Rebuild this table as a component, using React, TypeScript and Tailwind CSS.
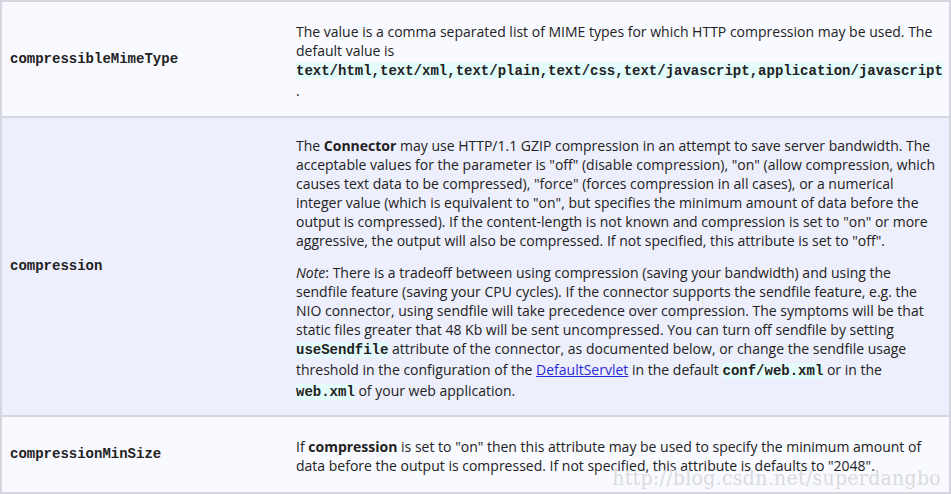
import React from 'react';

const mono = "font-['Liberation_Mono',monospace] tracking-normal";

function Code({ children }: { children: React.ReactNode }) {
    return <code className={`${mono} font-bold text-[14px] bg-[#e4fbfb] text-[#222]`}>{children}</code>;
}

function Row({ name, bg, pad, children }: { name: string; bg: string; pad: string; children: React.ReactNode }) {
    return (
        <div className={`flex ${bg}`}>
            <div className={`w-[286px] shrink-0 flex items-center pl-[8px] ${mono} font-bold text-[14px] text-[#222]`}>
                {name}
            </div>
            <div className={`flex-1 min-w-0 pl-[8px] pr-[8px] ${pad} flex flex-col gap-[13px]`}>
                {children}
            </div>
        </div>
    );
}

export default function App() {
    return (
        <div className="relative w-[951px] h-[494px] overflow-hidden bg-white font-['Open_Sans',sans-serif] text-[14px] leading-[19px] text-[#222] tracking-[0px]">
            <div className="border-2 border-[#d6d6de] divide-y-2 divide-[#d6d6de] h-[494px] flex flex-col">
                <Row name="compressibleMimeType" bg="bg-[#f9faff] h-[116px]" pad="pt-[20px] pb-[16px]">
                    <p>
                        The value is a comma separated list of MIME types for which HTTP compression may be used. The default value is{' '}
                        <Code>text/html,text/xml,text/plain,text/css,text/javascript,application/javascript</Code>{' '}.
                    </p>
                </Row>
                <Row name="compression" bg="bg-[#eeeffc] h-[299px]" pad="pt-[18px] pb-[16px]">
                    <p>
                        The <strong>Connector</strong> may use HTTP/1.1 GZIP compression in an attempt to save server bandwidth. The acceptable values for the parameter is "off" (disable compression), "on" (allow compression, which causes text data to be compressed), "force" (forces compression in all cases), or a numerical integer value (which is equivalent to "on", but specifies the minimum amount of data before the output is compressed). If the content-length is not known and compression is set to "on" or more aggressive, the output will also be compressed. If not specified, this attribute is set to "off".
                    </p>
                    <p>
                        <em>Note</em>: There is a tradeoff between using compression (saving your bandwidth) and using the sendfile feature (saving your CPU cycles). If the connector supports the sendfile feature, e.g. the NIO connector, using sendfile will take precedence over compression. The symptoms will be that static files greater that 48 Kb will be sent uncompressed. You can turn off sendfile by setting{' '}
                        <Code>useSendfile</Code> attribute of the connector, as documented below, or change the sendfile usage threshold in the configuration of the{' '}
                        <a href="#" className="text-[#2a2ad8] underline">DefaultServlet</a> in the default <Code>conf/web.xml</Code> or in the{' '}
                        <Code>web.xml</Code> of your web application.
                    </p>
                </Row>
                <Row name="compressionMinSize" bg="bg-[#f9faff] flex-1" pad="pt-[20px] pb-[14px]">
                    <p>
                        If <strong>compression</strong> is set to "on" then this attribute may be used to specify the minimum amount of data before the output is compressed. If not specified, this attribute is defaults to "2048".
                    </p>
                </Row>
            </div>
            <div className="absolute right-[10px] bottom-[6px] font-['DejaVu_Serif_Condensed','Liberation_Serif',serif] font-light text-[21px] tracking-[0.3px] text-[#dadade] pointer-events-none">
                http://blog.csdn.net/superdangbo
            </div>
        </div>
    );
}
